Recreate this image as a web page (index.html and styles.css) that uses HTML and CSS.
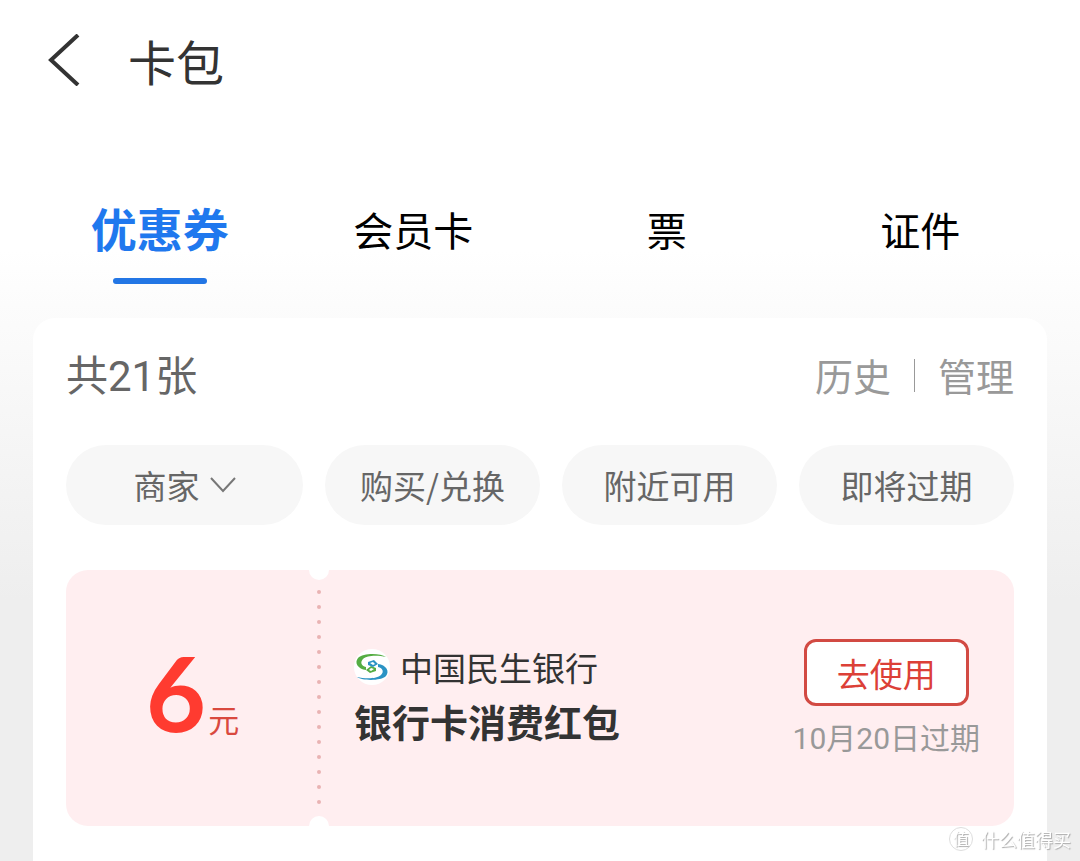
FILE: index.html
```html
<!DOCTYPE html>
<html lang="zh-CN">
<head>
    <meta charset="UTF-8">
    <meta name="viewport" content="width=device-width, initial-scale=1.0">
    <title>卡包</title>
    <link rel="stylesheet" href="styles.css">
</head>
<body>
    <div class="page">
        <header class="header">
            <button type="button" class="back" aria-label="返回">
                <svg width="32" height="52" viewBox="0 0 32 52" fill="none" stroke="#333" stroke-width="4">
                    <path d="M30 1 L3 26 L30 51"/>
                </svg>
            </button>
            <h1>卡包</h1>
        </header>

        <nav class="tabs">
            <a href="#coupon" class="tab active">优惠券</a>
            <a href="#member" class="tab">会员卡</a>
            <a href="#ticket" class="tab">票</a>
            <a href="#license" class="tab">证件</a>
        </nav>

        <main class="card">
            <div class="summary">
                <h2>共21张</h2>
                <div class="links">
                    <a href="#history">历史</a>
                    <span class="line"></span>
                    <a href="#manage">管理</a>
                </div>
            </div>

            <div class="filters">
                <label class="pill">
                    <select aria-label="商家">
                        <option>商家</option>
                    </select>
                    <svg width="26" height="16" viewBox="0 0 26 16" fill="none" stroke="#777" stroke-width="2">
                        <path d="M1 1 L13 14 L25 1"/>
                    </svg>
                </label>
                <button type="button" class="pill">购买/兑换</button>
                <button type="button" class="pill">附近可用</button>
                <button type="button" class="pill">即将过期</button>
            </div>

            <!-- 优惠券 -->
            <section class="coupon">
                <div class="amount">
                    <span class="number">6</span>
                    <span class="unit">元</span>
                </div>
                <div class="divider">
                    <svg width="4" height="218" viewBox="0 0 4 218">
                        <path d="M2 3 V215" stroke="#e9b3b3" stroke-width="4" stroke-linecap="round" stroke-dasharray="0 15"/>
                    </svg>
                </div>
                <div class="info">
                    <div class="bank">
                        <svg width="36" height="36" viewBox="0 0 36 36" fill="none">
                            <circle cx="18" cy="18" r="18" fill="#fff"/>
                            <path d="M32 8 C26 4 9 4 4 9 C0 14 4 20 12 21 L16 24 L22 22 L22 19 L17 17 L12 21 L12 18 C7 17 6 13 9 10 C13 6 24 6 32 8 Z" fill="#55ad43"/>
                            <path d="M3 28 C9 32 27 32 32 27 C36 22 32 16 24 15 L20 11 L14 13 L14 16 L19 18 L24 15 L24 18 C29 19 30 23 27 26 C23 30 11 30 3 28 Z" fill="#2b93c4"/>
                            <path d="M16 14 L19 13 L21 15 L19 16 Z M15 21 L17 19 L20 20 L17 22 Z" fill="#fff"/>
                        </svg>
                        <span>中国民生银行</span>
                    </div>
                    <h3>银行卡消费红包</h3>
                </div>
                <div class="action">
                    <button type="button" class="use">去使用</button>
                    <p>10月20日过期</p>
                </div>
            </section>
        </main>
    </div>

    <div class="watermark">
        <span class="mark">值</span>
        <span>什么值得买</span>
    </div>
</body>
</html>
```
FILE: styles.css
```css
* {
    box-sizing: border-box;
}

body {
    margin: 0;
    font-family: "Noto Sans CJK SC", sans-serif;
    color: #333;
    background: #fff;
}

a {
    color: inherit;
    text-decoration: none;
}

button, select {
    font-family: inherit;
    cursor: pointer;
}

h1, h2, h3, p {
    margin: 0;
    font-weight: 400;
}

.page {
    display: flex;
    flex-direction: column;
    min-height: 100vh;
    padding: 0 33px;
    background: linear-gradient(#fff 250px, #fcfcfc 305px, #eee 600px);
}

.header {
    display: flex;
    align-items: center;
    gap: 48px;
    height: 120px;
    padding-left: 15px;
}

.back {
    display: flex;
    padding: 0;
    border: none;
    background: none;
}

h1 {
    font-size: 48px;
    line-height: 60px;
}

/* 标签栏 */
.tabs {
    display: grid;
    grid-template-columns: repeat(4, 1fr);
    height: 164px;
    margin-bottom: 34px;
}

.tab {
    display: flex;
    flex-direction: column;
    align-items: center;
    justify-content: flex-end;
    padding-bottom: 25px;
    font-size: 40px;
    line-height: 60px;
    color: #000;
}

.tab.active {
    padding-bottom: 0;
    font-size: 46px;
    font-weight: 700;
    color: #1f78ee;
}

.tab.active::after {
    content: "";
    width: 94px;
    height: 6px;
    margin-top: 21px;
    border-radius: 3px;
    background: #2376e5;
}

.card {
    flex: 1;
    padding: 27px 33px 35px;
    border-radius: 22px 22px 0 0;
    background: #fff;
}

.summary {
    display: flex;
    align-items: center;
    justify-content: space-between;
    height: 60px;
    margin-bottom: 40px;
}

h2 {
    padding-top: 4px;
    font-family: Roboto, "Noto Sans CJK SC", sans-serif;
    font-size: 42px;
    line-height: 60px;
    color: #666;
}

.links {
    display: flex;
    align-items: center;
    gap: 23px;
    font-size: 38px;
    line-height: 60px;
    color: #999;
}

.line {
    width: 1px;
    height: 33px;
    background: #999;
}

.filters {
    display: grid;
    grid-template-columns: 237fr 215fr 215fr 215fr;
    gap: 22px;
    margin-bottom: 45px;
}

.pill {
    display: flex;
    align-items: center;
    justify-content: center;
    gap: 10px;
    height: 80px;
    padding: 0;
    border: none;
    border-radius: 40px;
    font-size: 33px;
    color: #666;
    background: #f7f7f7;
}

.pill select {
    appearance: none;
    padding: 0;
    border: none;
    font-size: 33px;
    color: #666;
    background: none;
}

/* 优惠券 */
.coupon {
    display: flex;
    height: 256px;
    border-radius: 22px;
    background: #ffeef0;
    overflow: hidden;
}

.amount {
    display: flex;
    align-items: baseline;
    justify-content: center;
    gap: 2px;
    width: 243px;
    padding: 58px 0 0 10px;
    color: #ff3b30;
}

.number {
    font-family: Lato, sans-serif;
    font-size: 104px;
    font-weight: 700;
    line-height: 128px;
}

.unit {
    font-size: 31px;
    color: #d9493f;
}

.divider {
    display: flex;
    flex-direction: column;
    align-items: center;
    justify-content: space-between;
    width: 20px;
}

.divider::before, .divider::after {
    content: "";
    width: 20px;
    height: 10px;
    background: #fff;
}

.divider::before {
    border-radius: 0 0 10px 10px;
}

.divider::after {
    border-radius: 10px 10px 0 0;
}

.info {
    flex: 1;
    padding: 72px 0 0 25px;
}

.bank {
    display: flex;
    align-items: center;
    gap: 10px;
    font-size: 33px;
    line-height: 50px;
}

h3 {
    font-size: 38px;
    font-weight: 700;
    line-height: 58px;
}

.action {
    display: flex;
    flex-direction: column;
    align-items: center;
    gap: 11px;
    padding: 69px 34px 0 0;
}

.use {
    width: 165px;
    height: 67px;
    padding: 0;
    border: 3px solid #d24a43;
    border-radius: 12px;
    font-size: 33px;
    color: #dc4037;
    background: #fff;
}

.action p {
    font-family: Roboto, "Noto Sans CJK SC", sans-serif;
    font-size: 30px;
    line-height: 44px;
    color: #999;
}

.watermark {
    position: fixed;
    right: 9px;
    bottom: 9px;
    display: flex;
    align-items: center;
    gap: 8px;
    font-size: 18px;
    line-height: 26px;
    color: #fff;
    text-shadow: 1px 1px 1px #aaa;
}

.mark {
    width: 24px;
    height: 24px;
    border: 1px solid #ddd;
    border-radius: 50%;
    font-size: 16px;
    line-height: 20px;
    text-align: center;
}
```
